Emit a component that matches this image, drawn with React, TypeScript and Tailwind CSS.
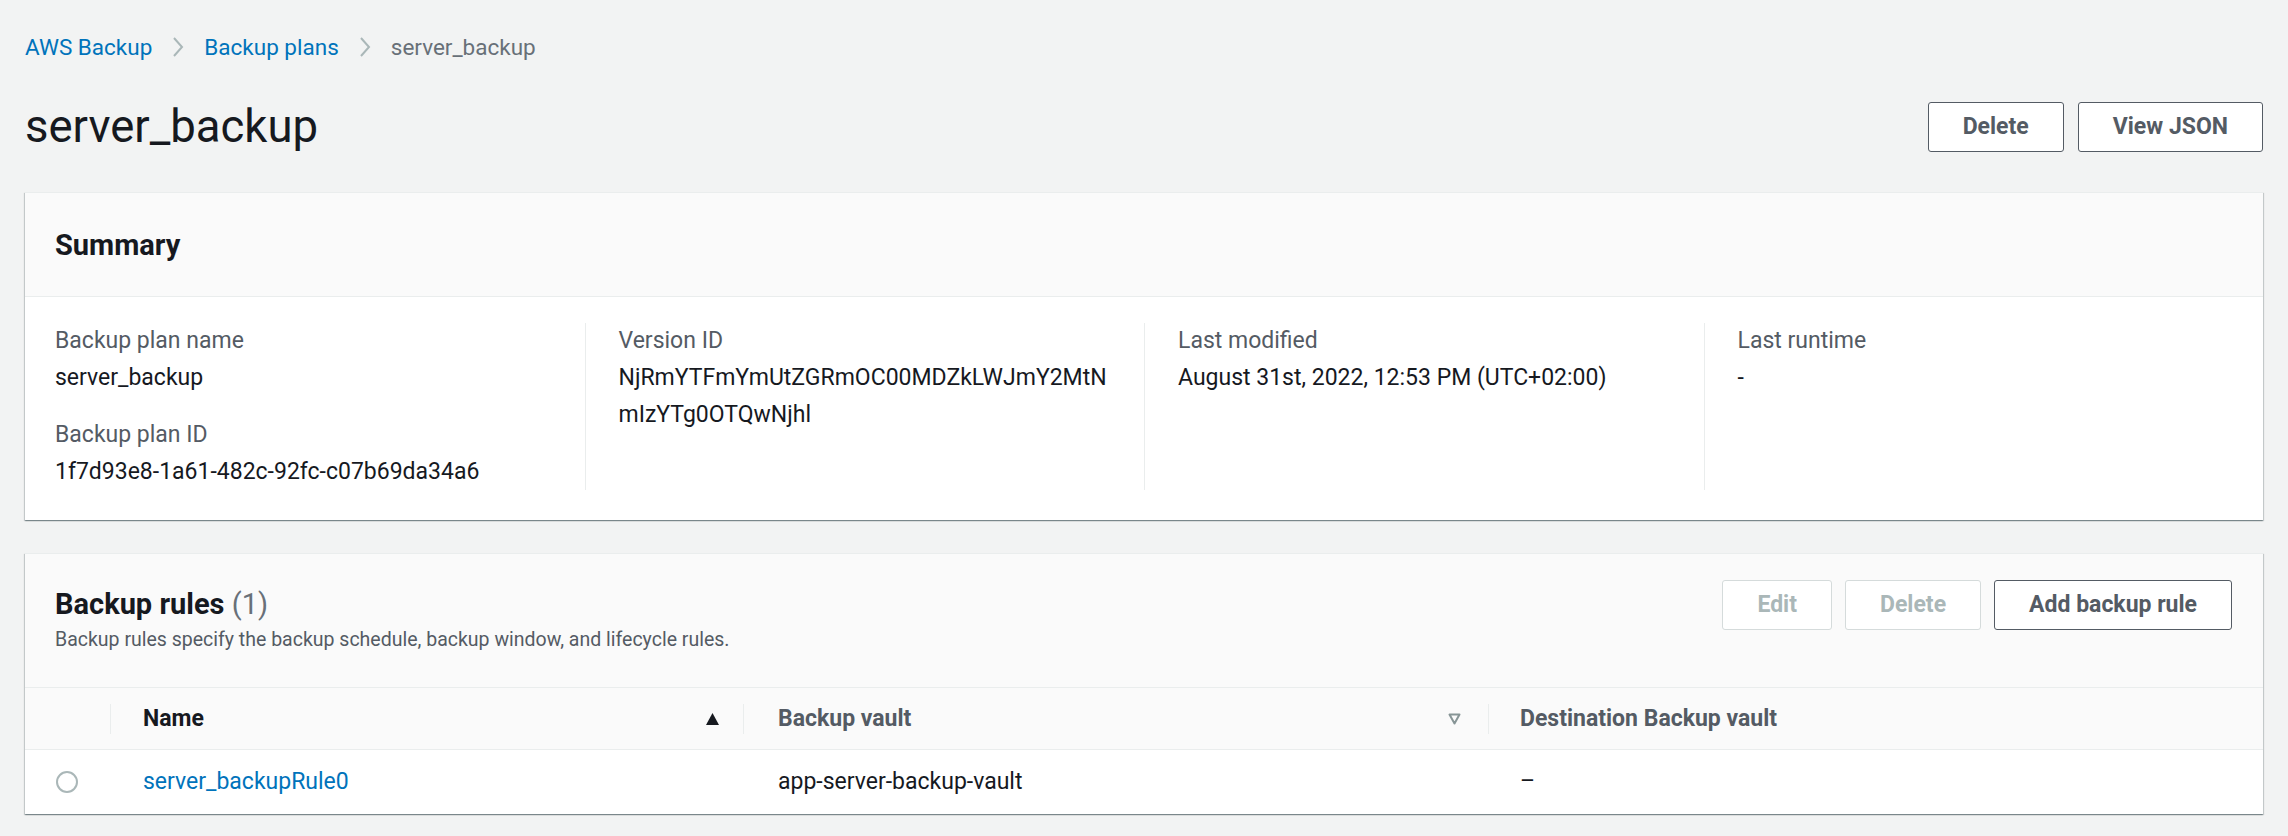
const font = { fontFamily: "Roboto, 'Noto Sans', sans-serif" };

function Chevron() {
  return (
    <svg width="12" height="20" viewBox="0 0 12 20" className="mx-[20px] shrink-0">
      <polyline points="2,1 10,10 2,19" fill="none" stroke="#aab7b8" strokeWidth="2" />
    </svg>
  );
}

function Button({ label, disabled }: { label: string; disabled?: boolean }) {
  return (
    <button
      className={
        disabled
          ? "h-[50px] rounded-[3px] border border-[#d5dbdb] bg-white px-[34px] text-[23px] font-bold text-[#aab7b8]"
          : "h-[50px] rounded-[3px] border border-[#545b64] bg-white px-[34px] text-[23px] font-bold text-[#545b64]"
      }
    >
      {label}
    </button>
  );
}

type Field = { label: string; value: string[] };
const columns: Field[][] = [
  [
    { label: "Backup plan name", value: ["server_backup"] },
    { label: "Backup plan ID", value: ["1f7d93e8-1a61-482c-92fc-c07b69da34a6"] },
  ],
  [{ label: "Version ID", value: ["NjRmYTFmYmUtZGRmOC00MDZkLWJmY2MtN", "mIzYTg0OTQwNjhl"] }],
  [{ label: "Last modified", value: ["August 31st, 2022, 12:53 PM (UTC+02:00)"] }],
  [{ label: "Last runtime", value: ["-"] }],
];

const card =
  "bg-white border-t border-[#eaeded] shadow-[0_1px_1px_0_rgba(0,28,36,0.3),1px_1px_1px_0_rgba(0,28,36,0.15),-1px_1px_1px_0_rgba(0,28,36,0.15)]";

export default function App() {
  return (
    <div style={font} className="min-h-[836px] bg-[#f2f3f3] px-[25px] pt-[29px] text-[23px] leading-[36px] text-[#16191f]">
      <nav className="flex items-center text-[22.5px]">
        <a className="text-[#0073bb]">AWS Backup</a>
        <Chevron />
        <a className="text-[#0073bb]">Backup plans</a>
        <Chevron />
        <span className="text-[#687078]">server_backup</span>
      </nav>

      <div className="mt-[37px] flex h-[50px] items-center justify-between">
        <h1 className="text-[45.5px] font-normal leading-[50px]">server_backup</h1>
        <div className="flex gap-[14px]">
          <Button label="Delete" />
          <Button label="View JSON" />
        </div>
      </div>

      <section className={`mt-[40px] ${card}`}>
        <div className="flex h-[104px] items-center border-b border-[#eaeded] bg-[#fafafa] px-[30px]">
          <h2 className="text-[29px] font-bold">Summary</h2>
        </div>
        <div className="grid grid-cols-4 pb-[30px] pt-[26px]">
          {columns.map((col, i) => (
            <div key={i} className={i === 0 ? "flex flex-col gap-[21px] px-[30px]" : "flex flex-col gap-[21px] border-l border-[#eaeded] px-[33px]"}>
              {col.map((f) => (
                <div key={f.label}>
                  <div className="text-[#545b64]">{f.label}</div>
                  {f.value.map((v) => (
                    <div key={v} className="leading-[37px]">{v}</div>
                  ))}
                </div>
              ))}
            </div>
          ))}
        </div>
      </section>

      <section className={`mt-[33px] ${card}`}>
        <div className="flex items-start justify-between bg-[#fafafa] pb-[35px] pl-[30px] pr-[31px] pt-[26px]">
          <div>
            <h2 className="text-[29px] font-bold leading-[48px]">
              Backup rules <span className="font-normal text-[#687078]">(1)</span>
            </h2>
            <p className="text-[19.5px] leading-[24px] text-[#545b64]">
              Backup rules specify the backup schedule, backup window, and lifecycle rules.
            </p>
          </div>
          <div className="flex gap-[13px]">
            <Button label="Edit" disabled />
            <Button label="Delete" disabled />
            <Button label="Add backup rule" />
          </div>
        </div>

        <div className="grid grid-cols-[85px_633px_745px_1fr]">
          <div className="h-[63px] border-y border-[#eaeded] bg-[#fafafa]" />
          <div className="flex h-[63px] items-center border-y border-[#eaeded] bg-[#fafafa]">
            <span className="h-[30px] w-px bg-[#eaeded]" />
            <span className="flex-1 pl-[32px] font-bold">Name</span>
            <svg width="15" height="14" viewBox="0 0 15 14" className="mr-[23px]">
              <polygon points="7.5,1 14,13 1,13" fill="#16191f" />
            </svg>
          </div>
          <div className="flex h-[63px] items-center border-y border-[#eaeded] bg-[#fafafa]">
            <span className="h-[30px] w-px bg-[#eaeded]" />
            <span className="flex-1 pl-[34px] font-bold text-[#545b64]">Backup vault</span>
            <svg width="13" height="12" viewBox="0 0 13 12" className="mr-[27px]">
              <polygon points="1.5,1.5 11.5,1.5 6.5,10.5" fill="none" stroke="#879596" strokeWidth="2" strokeLinejoin="round" />
            </svg>
          </div>
          <div className="flex h-[63px] items-center border-y border-[#eaeded] bg-[#fafafa]">
            <span className="h-[30px] w-px bg-[#eaeded]" />
            <span className="pl-[31px] font-bold text-[#545b64]">Destination Backup vault</span>
          </div>

          <div className="flex h-[64px] items-center pl-[31px]">
            <span className="h-[22px] w-[22px] rounded-full border-2 border-[#aab7b8] bg-white" />
          </div>
          <div className="flex h-[64px] items-center pl-[33px]">
            <a className="text-[#0073bb]">server_backupRule0</a>
          </div>
          <div className="flex h-[64px] items-center pl-[35px]">app-server-backup-vault</div>
          <div className="flex h-[64px] items-center pl-[32px]">–</div>
        </div>
      </section>
    </div>
  );
}
